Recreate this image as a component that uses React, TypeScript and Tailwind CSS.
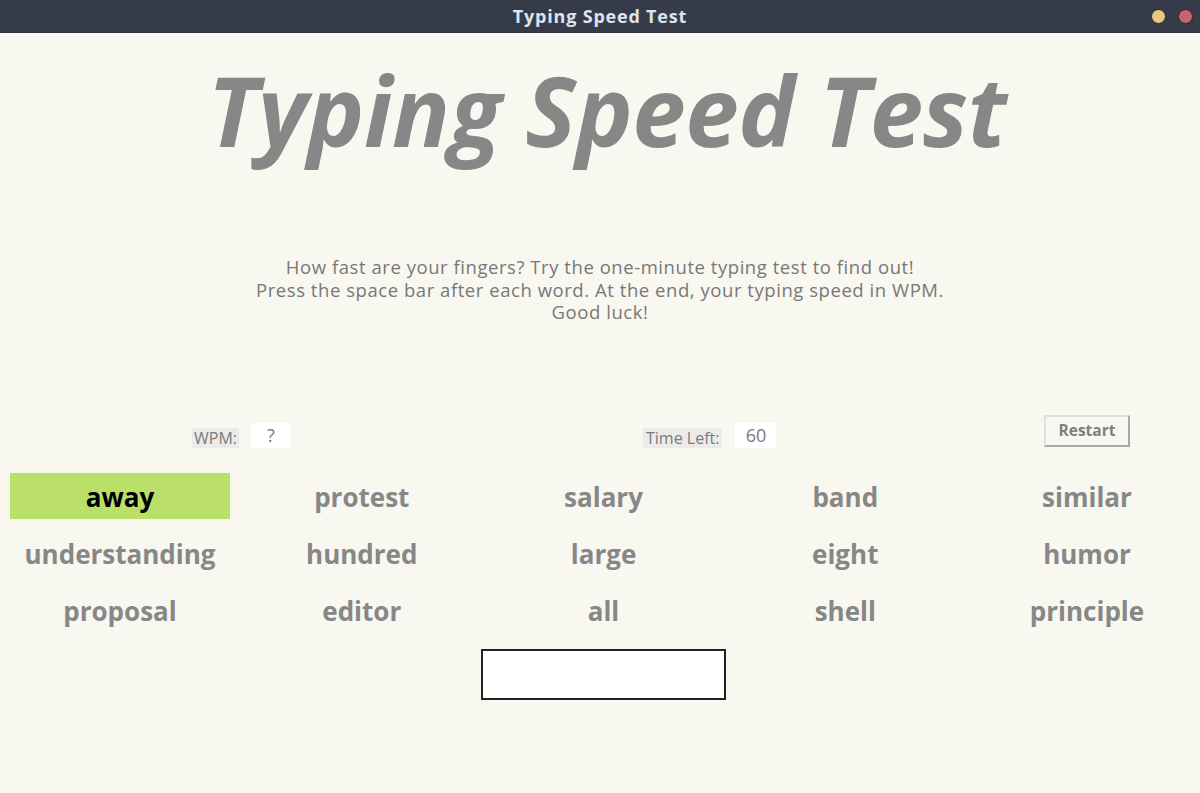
const words = [
  'away',
  'protest',
  'salary',
  'band',
  'similar',
  'understanding',
  'hundred',
  'large',
  'eight',
  'humor',
  'proposal',
  'editor',
  'all',
  'shell',
  'principle',
];

const font = { fontFamily: '"Open Sans", "Noto Sans", sans-serif' };

const TitleBar = () => (
  <div className="relative flex h-[33px] items-center justify-center border-b border-[#2b2f3a] bg-[#363b4a]">
    <span className="text-[18px] font-bold tracking-[0.8px] text-[#dde3f0]">Typing Speed Test</span>
    <div className="absolute right-[7px] top-[9px] flex gap-[12px]">
      <span className="size-[15px] rounded-full border border-[#23262e] bg-[#e8c884]" />
      <span className="size-[15px] rounded-full border border-[#23262e] bg-[#c8626e]" />
    </div>
  </div>
);

const App = () => {
  return (
    <div className="flex h-[793px] w-[1200px] flex-col overflow-hidden bg-[#f8f7f0]" style={font}>
      <TitleBar />

      <h1 className="mt-[29px] pl-[14px] text-center text-[96px] font-bold italic leading-none tracking-[-0.5px] text-[#878787]">
        Typing Speed Test
      </h1>

      <div className="mt-[98px] text-center text-[18.5px] leading-[22.5px] tracking-[0.55px] text-[#787878]">
        <p>How fast are your fingers? Try the one-minute typing test to find out!</p>
        <p>Press the space bar after each word. At the end, your typing speed in WPM.</p>
        <p>Good luck!</p>
      </div>

      <div className="mt-[91px] flex h-[33px] items-end">
        <div className="ml-[192px] flex items-end">
          <span className="bg-[#ebebeb] px-[2px] text-[16px] leading-[20px] text-[#7a7a7a]">WPM:</span>
          <span className="ml-[12px] flex h-[25px] w-[40px] items-center justify-center bg-white text-[18px] text-[#7a7a7a]">
            ?
          </span>
        </div>
        <div className="ml-[352px] flex items-end">
          <span className="bg-[#ebebeb] px-[3px] text-[16px] leading-[20px] text-[#7a7a7a]">Time Left:</span>
          <span className="ml-[13px] flex h-[25px] w-[41px] items-center justify-center bg-white text-[18px] text-[#7a7a7a]">
            60
          </span>
        </div>
        <button className="mb-[1px] ml-auto mr-[70px] h-[32px] w-[86px] border-2 border-t-[#e0e0e0] border-l-[#e0e0e0] border-r-[#a8a8a8] border-b-[#a8a8a8] bg-[#f8f7f0] text-[15.5px] font-bold text-[#7f7f7f]">
          Restart
        </button>
      </div>

      <div className="mt-[25px] grid grid-cols-[repeat(5,220px)] gap-x-[21.75px] gap-y-[11px] pl-[10px]">
        {words.map((word, i) => (
          <div
            key={word}
            className={
              i === 0
                ? 'flex h-[46px] items-center justify-center bg-[#bbe06a] pt-[3px] text-[26px] font-bold text-black'
                : 'flex h-[46px] items-center justify-center pt-[3px] text-[26px] font-bold text-[#878787]'
            }
          >
            {word}
          </div>
        ))}
      </div>

      <div className="mt-[16px] flex justify-center">
        <input className="ml-[6px] h-[51px] w-[245px] border-2 border-[#222] bg-white outline-none" />
      </div>
    </div>
  );
};

export default App;
